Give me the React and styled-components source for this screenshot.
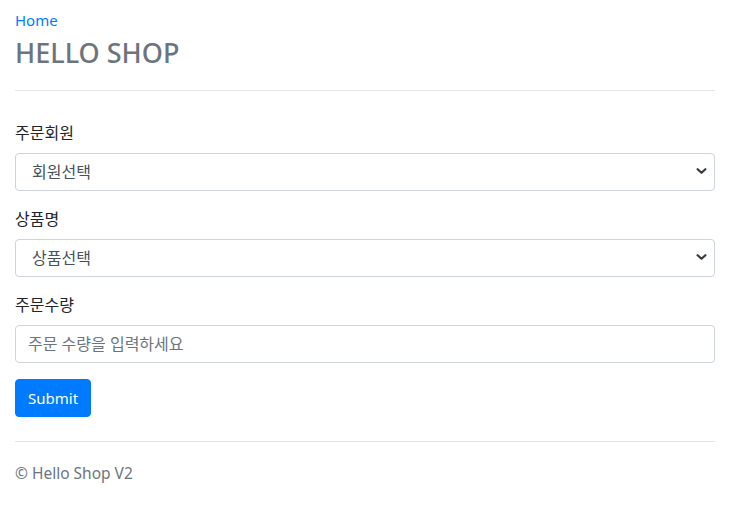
import React from "react";
import styled, { createGlobalStyle } from "styled-components";

const Global = createGlobalStyle`
  html, body { margin: 0; padding: 0; background: #fff; }
  body {
    font-family: "Noto Sans", "Noto Sans CJK KR", sans-serif;
    font-size: 16px;
    line-height: 1.5;
    color: #212529;
  }
  * { box-sizing: border-box; }
`;

const Container = styled.div`
  width: 730px;
  padding: 8px 15px 0;
`;

const Header = styled.header`
  display: flex;
  flex-direction: column;
`;

const HomeLink = styled.a`
  color: #007bff;
  text-decoration: none;
  font-size: 15px;
  line-height: 24px;
`;

const Title = styled.h3`
  margin: 5px 0 8px;
  font-size: 27px;
  font-weight: 500;
  line-height: 1.2;
  color: #6c757d;
`;

const Rule = styled.hr`
  margin: ${(p) => p.$mt || 16}px 0 16px;
  border: 0;
  border-top: 1px solid rgba(0, 0, 0, 0.1);
  width: 700px;
`;

const Form = styled.form`
  display: flex;
  flex-direction: column;
  width: 700px;
  padding-top: 14px;
`;

const Group = styled.div`
  display: flex;
  flex-direction: column;
  margin-bottom: 16px;
`;

const Label = styled.label`
  display: block;
  margin-bottom: 8px;
  font-size: 16px;
  line-height: 24px;
`;

const SelectWrap = styled.div`
  position: relative;
`;

const Select = styled.select`
  appearance: none;
  width: 100%;
  height: 38px;
  padding: 6px 28px 6px 16px;
  font: inherit;
  font-size: 16px;
  color: #495057;
  background: #fff;
  border: 1px solid #ced4da;
  border-radius: 4px;
`;

const Chevron = styled.svg`
  position: absolute;
  right: 8px;
  top: 14px;
  width: 11px;
  height: 8px;
  pointer-events: none;
`;

const Input = styled.input`
  width: 100%;
  height: 38px;
  padding: 6px 12px;
  font: inherit;
  font-size: 16px;
  color: #495057;
  border: 1px solid #ced4da;
  border-radius: 4px;
  &::placeholder { color: #6c757d; }
`;

const Button = styled.button`
  align-self: flex-start;
  height: 38px;
  width: 76px;
  padding: 6px 12px;
  font: inherit;
  font-size: 15px;
  color: #fff;
  background: #007bff;
  border: 1px solid #007bff;
  border-radius: 4px;
`;

const Footer = styled.footer`
  color: #6c757d;
  font-size: 15.5px;
  line-height: 24px;
  padding-top: 3px;
`;

function Arrow() {
  return (
    <Chevron viewBox="0 0 11 8">
      <path
        fill="none"
        stroke="#343a40"
        strokeWidth="2.2"
        strokeLinecap="round"
        strokeLinejoin="round"
        d="M1.6 2.2L5.5 5.8L9.4 2.2"
      />
    </Chevron>
  );
}

export default function App() {
  return (
    <>
      <Global />
      <Container>
        <Header>
          <HomeLink href="#">Home</HomeLink>
          <Title>HELLO SHOP</Title>
        </Header>
        <Rule $mt={13} />
        <Form onSubmit={(e) => e.preventDefault()}>
          <Group>
            <Label>주문회원</Label>
            <SelectWrap>
              <Select defaultValue="">
                <option value="">회원선택</option>
              </Select>
              <Arrow />
            </SelectWrap>
          </Group>
          <Group>
            <Label>상품명</Label>
            <SelectWrap>
              <Select defaultValue="">
                <option value="">상품선택</option>
              </Select>
              <Arrow />
            </SelectWrap>
          </Group>
          <Group>
            <Label>주문수량</Label>
            <Input type="number" placeholder="주문 수량을 입력하세요" />
          </Group>
          <Button type="submit">Submit</Button>
        </Form>
        <Rule $mt={24} />
        <Footer>© Hello Shop V2</Footer>
      </Container>
    </>
  );
}
